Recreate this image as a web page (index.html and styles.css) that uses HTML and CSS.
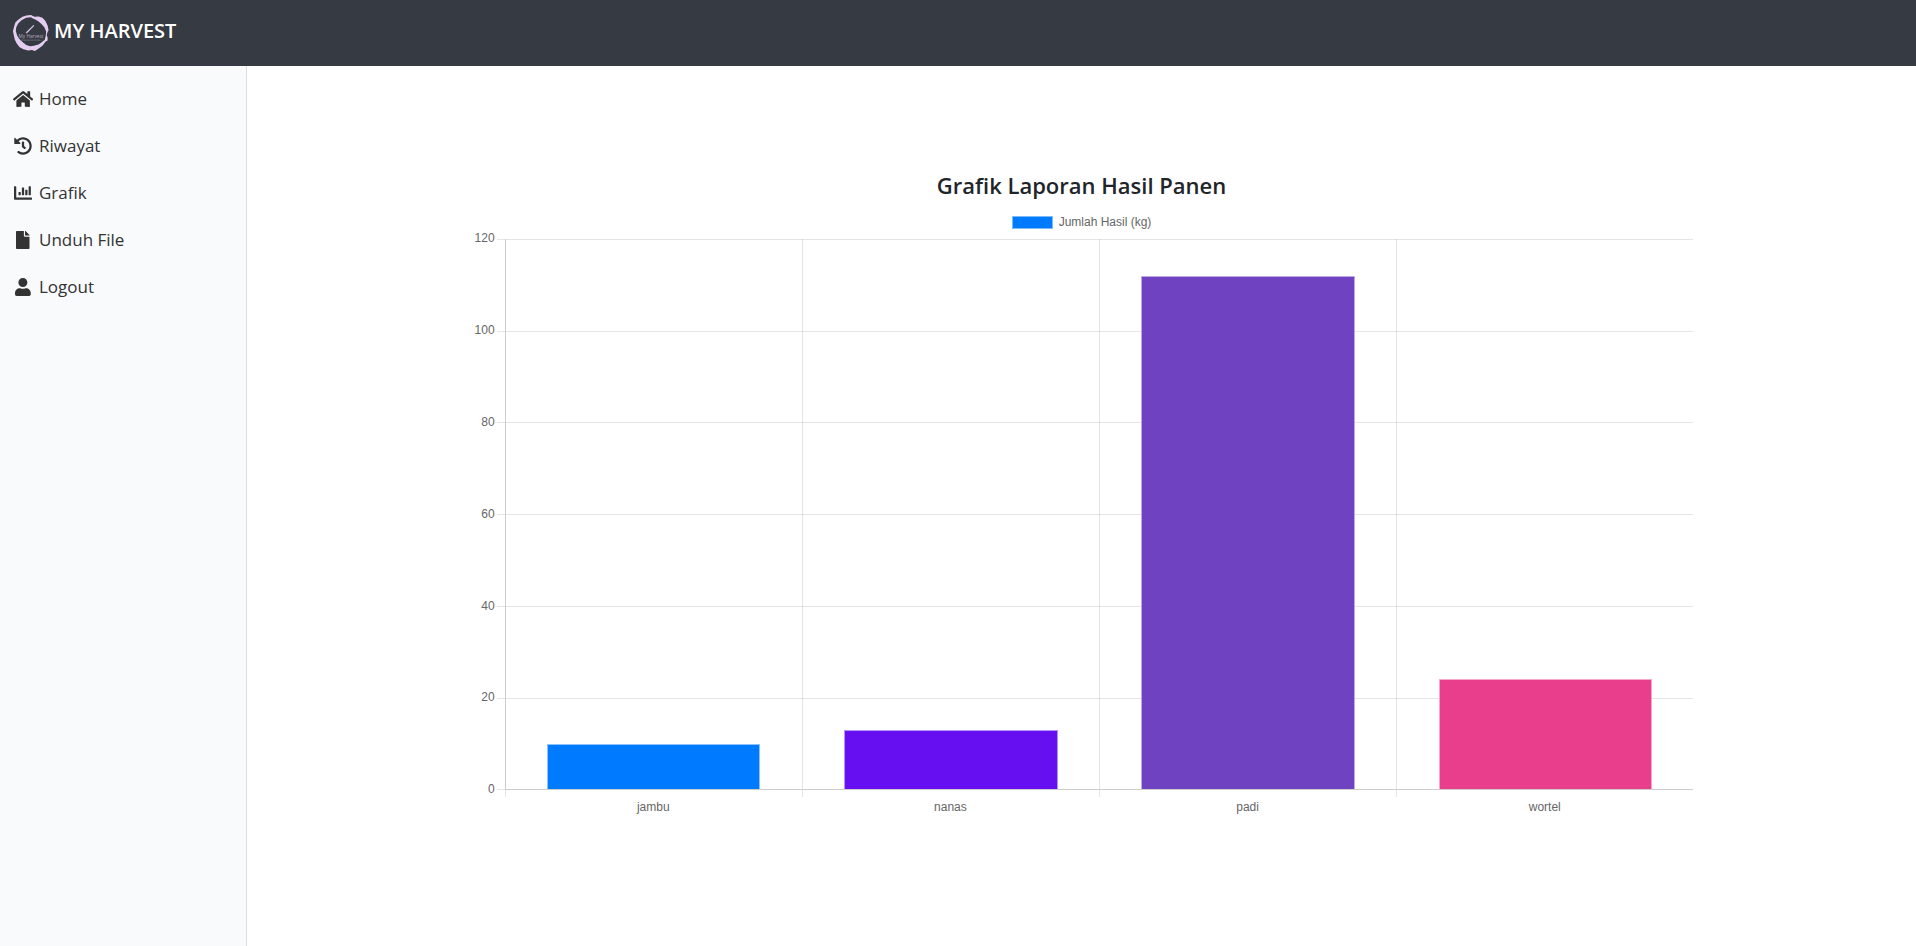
FILE: index.html
```html
<!DOCTYPE html>
<html lang="id">
<head>
<meta charset="utf-8">
<title>My Harvest</title>
<link rel="stylesheet" href="styles.css">
</head>
<body>
<header class="topbar">
  <a class="brand" href="#">
    <svg class="logo" viewBox="0 0 40 40" aria-hidden="true">
      <path fill="#e3cdf0" fill-rule="evenodd" d="M20 1 22 2 24 3 28 2.500 32 4 35 7 37.500 12 38.500 17 37.500 19 36.500 22 37.500 25 37.500 28 35.500 29 32 33.500 27 37 24 39 21 38 17 38.500 12 37 8 35 5 31 3 27 2 23 1 18 2 14 3.500 9 6.500 6 11 3 15 1.500ZM20 3.400 15 4 10 6.500 6.500 10 4.500 14 4 18 5.500 23 7.500 26 11 29.500 15 32.500 19 34 23 33.500 28 32 31 30 34.500 27 35.500 23 36 18.500 34 14 31 10.500 28 8 25 6 22 4.700Z"/>
      <path stroke="#d8c6e2" stroke-width="1.400" d="m15 20 8-8"/>
      <text class="logo-name" x="20" y="25" text-anchor="middle">My Harvest</text>
      <path stroke="#80788a" stroke-width=".8" stroke-dasharray="3 .5" d="M9 27.500h22"/>
    </svg>
    <span>MY HARVEST</span>
  </a>
</header>
<div class="layout">
  <nav class="sidebar">
    <a href="#"><span class="icon"><svg viewBox="0 0 576 512"><path d="M280.370 148.260 96 300.110V464a16 16 0 0 0 16 16l112.060-.29a16 16 0 0 0 15.920-16V368a16 16 0 0 1 16-16h64a16 16 0 0 1 16 16v95.640a16 16 0 0 0 16 16.050L464 480a16 16 0 0 0 16-16V300L295.670 148.260a12.190 12.190 0 0 0-15.300 0zM571.600 251.470 488 182.560V44.050a12 12 0 0 0-12-12h-56a12 12 0 0 0-12 12v72.610L318.470 43a48 48 0 0 0-61 0L4.340 251.470a12 12 0 0 0-1.600 16.900l25.500 31A12 12 0 0 0 45.150 301l235.220-193.740a12.190 12.190 0 0 1 15.300 0L530.900 301a12 12 0 0 0 16.900-1.600l25.500-31a12 12 0 0 0-1.700-16.930z"/></svg></span>Home</a>
    <a href="#"><span class="icon"><svg viewBox="0 0 512 512"><path d="M504 255.531c.253 136.640-111.180 248.372-247.820 248.468-59.015.042-113.223-20.530-155.822-54.911-11.077-8.940-11.905-25.541-1.839-35.607l11.267-11.267c8.609-8.609 22.353-9.551 31.891-1.984C173.062 425.135 212.781 440 256 440c101.705 0 184-82.311 184-184 0-101.705-82.311-184-184-184-48.814 0-93.149 18.969-126.068 49.932l50.754 50.754c10.080 10.080 2.941 27.314-11.313 27.314H24c-8.837 0-16-7.163-16-16V38.627c0-14.254 17.234-21.393 27.314-11.314l49.372 49.372C129.209 34.136 189.552 8 256 8c136.810 0 247.747 110.780 248 247.531zm-180.912 78.784 9.823-12.630c8.138-10.463 6.253-25.542-4.210-33.679L288 256.349V152c0-13.255-10.745-24-24-24h-16c-13.255 0-24 10.745-24 24v135.651l65.409 50.874c10.463 8.137 25.541 6.253 33.679-4.210z"/></svg></span>Riwayat</a>
    <a href="#"><span class="icon"><svg viewBox="0 0 512 512"><path d="M332.800 320h38.400c6.400 0 12.800-6.400 12.800-12.800V172.800c0-6.400-6.400-12.800-12.800-12.800h-38.400c-6.400 0-12.800 6.400-12.800 12.800v134.400c0 6.400 6.400 12.800 12.800 12.800zm96 0h38.400c6.400 0 12.800-6.400 12.800-12.800V76.800c0-6.400-6.400-12.800-12.800-12.800h-38.400c-6.400 0-12.800 6.400-12.800 12.800v230.400c0 6.400 6.400 12.800 12.800 12.800zm-288 0h38.400c6.400 0 12.800-6.400 12.800-12.800v-70.400c0-6.400-6.400-12.800-12.800-12.800h-38.400c-6.400 0-12.800 6.400-12.800 12.800v70.400c0 6.400 6.400 12.800 12.800 12.800zm96 0h38.400c6.400 0 12.800-6.400 12.800-12.800V108.800c0-6.400-6.400-12.800-12.800-12.800h-38.400c-6.400 0-12.800 6.400-12.800 12.800v198.400c0 6.400 6.400 12.800 12.800 12.800zM496 384H64V80c0-8.840-7.160-16-16-16H16C7.160 64 0 71.160 0 80v336c0 17.670 14.330 32 32 32h464c8.840 0 16-7.160 16-16v-32c0-8.840-7.160-16-16-16z"/></svg></span>Grafik</a>
    <a href="#"><span class="icon"><svg viewBox="0 0 384 512"><path d="M224 136V0H24C10.700 0 0 10.700 0 24v464c0 13.300 10.700 24 24 24h336c13.300 0 24-10.700 24-24V160H248c-13.200 0-24-10.800-24-24zm160-14.100v6.100H256V0h6.100c6.400 0 12.500 2.500 17 7l97.900 98c4.500 4.500 7 10.600 7 16.900z"/></svg></span>Unduh File</a>
    <a href="#"><span class="icon"><svg viewBox="0 0 448 512"><path d="M224 256c70.700 0 128-57.300 128-128S294.700 0 224 0 96 57.300 96 128s57.300 128 128 128zm89.600 32h-16.700c-22.200 10.200-46.900 16-72.900 16s-50.600-5.800-72.900-16h-16.700C60.200 288 0 348.200 0 422.400V464c0 26.500 21.500 48 48 48h352c26.500 0 48-21.500 48-48v-41.600c0-74.200-60.200-134.400-134.400-134.400z"/></svg></span>Logout</a>
  </nav>
  <main class="content">
    <section class="report">
      <h1>Grafik Laporan Hasil Panen</h1>
      <div class="legend"><span class="swatch"></span>Jumlah Hasil (kg)</div>
      <div class="chart">
        <div class="y-axis"><span>120</span><span>100</span><span>80</span><span>60</span><span>40</span><span>20</span><span>0</span></div>
        <div class="plot">
          <div class="rows"><i></i><i></i><i></i><i></i><i></i><i></i></div>
          <div class="columns">
            <div class="column"><div class="bar blue" style="height:8.33%"></div></div>
            <div class="column"><div class="bar indigo" style="height:10.83%"></div></div>
            <div class="column"><div class="bar purple" style="height:93.33%"></div></div>
            <div class="column"><div class="bar pink" style="height:20%"></div></div>
          </div>
        </div>
        <div class="x-axis"><span>jambu</span><span>nanas</span><span>padi</span><span>wortel</span></div>
      </div>
    </section>
  </main>
</div>
</body>
</html>
```

FILE: styles.css
```css
* { box-sizing: border-box; }

body {
  margin: 0;
  min-height: 100vh;
  display: flex;
  flex-direction: column;
  background: #fff;
  color: #212529;
  font-family: "Segoe UI", "Open Sans", "Noto Sans", sans-serif;
}

a { color: inherit; text-decoration: none; }

.topbar {
  height: 66px;
  padding: 0 12px;
  display: flex;
  background: #363a42;
}

.brand {
  display: flex;
  gap: 4px;
  color: #fff;
  font-size: 20px;
  font-weight: 600;
  line-height: 62px;
}

.logo { width: 38px; height: 38px; margin-top: 14px; }
.logo-name { font: 5px "Open Sans", sans-serif; fill: #b5a8bf; }

.layout { flex: 1; display: flex; }

.sidebar {
  flex: 0 0 247px;
  padding: 9px 12px;
  background: #f8fafc;
  border-right: 1px solid #ddd;
}

.sidebar a {
  height: 47px;
  display: flex;
  align-items: center;
  gap: 5px;
  color: #333;
  font-size: 17px;
}

.icon { width: 22px; display: flex; justify-content: center; }
.icon svg { height: 18px; fill: #333; }

.content {
  flex: 1;
  display: flex;
  justify-content: center;
  align-items: flex-start;
  padding-top: 103px;
}

.report { width: 75%; padding: 0 14px; }

h1 {
  margin: 0;
  font-size: 22px;
  font-weight: 600;
  line-height: 32px;
  text-align: center;
}

.legend {
  height: 38px;
  padding-top: 14px;
  display: flex;
  justify-content: center;
  align-items: flex-start;
  gap: 6px;
  color: #666;
  font: 12px/14px "Liberation Sans", Arial, sans-serif;
}

.swatch { width: 41px; height: 13px; margin-top: 1px; background: #007bff; border: 1px solid #7bbcf8; }

.chart {
  display: grid;
  grid-template-columns: 26px 1fr;
  column-gap: 9px;
  color: #666;
  font: 12px/14px "Liberation Sans", Arial, sans-serif;
}

.y-axis {
  display: flex;
  flex-direction: column;
  justify-content: space-between;
  margin: -8px 0 -6px;
  padding-right: 1px;
  text-align: right;
}

.plot { display: grid; aspect-ratio: 1188 / 551; }
.rows, .columns { grid-area: 1 / 1; display: grid; min-height: 0; }

.rows {
  grid-template-rows: repeat(6, 1fr);
  margin-left: -8px;
  border-bottom: 1px solid #e5e5e5;
}

.rows i { border-top: 1px solid #e5e5e5; }

.columns {
  grid-template-columns: repeat(4, 1fr);
  border-bottom: 1px solid #ccc;
}

.column {
  display: flex;
  align-items: flex-end;
  justify-content: center;
  border-left: 1px solid rgba(0, 0, 0, .1);
}

.column:first-child { border-left-color: #ccc; }

.bar { width: 72%; border: 1px solid rgba(255, 255, 255, .55); border-bottom: 0; }
.blue { background: #007bff; }
.indigo { background: #6610f2; }
.purple { background: #6f42c1; }
.pink { background: #e83e8c; }

.x-axis {
  grid-column: 2;
  display: grid;
  grid-template-columns: repeat(4, 1fr);
  text-align: center;
}

.x-axis span {
  padding-top: 10px;
  background: linear-gradient(#e5e5e5, #e5e5e5) 0 0 / 1px 7px no-repeat;
}
```
